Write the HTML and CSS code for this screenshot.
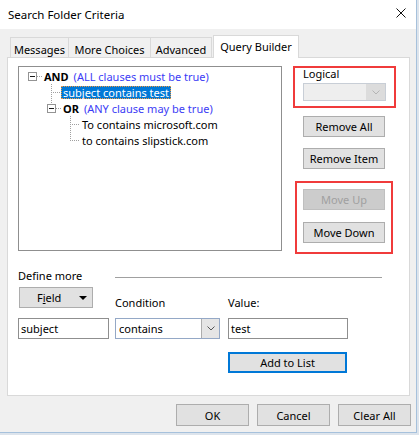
FILE: index.html
```html
<!DOCTYPE html>
<html lang="en">
<head>
<meta charset="utf-8">
<title>Search Folder Criteria</title>
<link rel="stylesheet" href="styles.css">
</head>
<body>
<div class="window">
  <div class="titlebar">
    <span class="title">Search Folder Criteria</span>
    <svg class="close" width="10" height="10" viewBox="0 0 10 10"><path d="M0.5 0.5 L9.5 9.5 M9.5 0.5 L0.5 9.5" stroke="#111" stroke-width="1" fill="none"/></svg>
  </div>

  <div class="tabstrip">
    <div class="tab tab-messages">Messages</div>
    <div class="tab tab-more">More Choices</div>
    <div class="tab tab-adv">Advanced</div>
    <div class="tab tab-active">Query Builder</div>
  </div>

  <div class="panel">
    <div class="upper">
      <div class="tree">
        <div class="row">
          <span class="cell exp-root"><span class="box"></span></span>
          <span class="node"><b>AND</b><span class="note">(ALL clauses must be true)</span></span>
        </div>
        <div class="row">
          <span class="cell"></span>
          <span class="cell tee"></span>
          <span class="node sel">subject contains test</span>
        </div>
        <div class="row">
          <span class="cell"></span>
          <span class="cell exp-last"><span class="box"></span></span>
          <span class="node"><b>OR</b><span class="note">(ANY clause may be true)</span></span>
        </div>
        <div class="row">
          <span class="cell"></span>
          <span class="cell"></span>
          <span class="cell tee"></span>
          <span class="node">To contains microsoft.com</span>
        </div>
        <div class="row">
          <span class="cell"></span>
          <span class="cell"></span>
          <span class="cell ell"></span>
          <span class="node">to contains slipstick.com</span>
        </div>
      </div>

      <div class="side">
        <div class="redbox rb-logical">
          <div class="lbl-logical">Logical</div>
          <div class="combo-dis">
            <span class="combo-field"></span>
            <span class="combo-btn-dis"><svg width="8" height="5" viewBox="0 0 8 5"><path d="M0.5 0.5 L4 4 L7.5 0.5" stroke="#b4b4b4" fill="none"/></svg></span>
          </div>
        </div>
        <button class="btn side-btn b-removeall">Remove All</button>
        <button class="btn side-btn b-removeitem">Remove Item</button>
        <div class="redbox rb-move">
          <button class="btn side-btn btn-disabled">Move Up</button>
          <button class="btn side-btn b-movedown">Move Down</button>
        </div>
      </div>
    </div>

    <div class="define">
      <span class="define-label">Define more</span>
      <span class="rule"></span>
    </div>

    <div class="form">
      <button class="btn field-btn"><span>F<u>i</u>eld</span><svg class="tri" width="8" height="4" viewBox="0 0 8 4"><polygon points="0,0 8,0 4,4" fill="#000"/></svg></button>
      <span class="flabel">Condition</span>
      <span class="flabel">Value:</span>

      <div class="textbox tb-subject">subject</div>
      <div class="combo-edit">
        <span class="combo-text">contains</span>
        <span class="combo-btn"><svg width="8" height="5" viewBox="0 0 8 5"><path d="M0.5 0.5 L4 4 L7.5 0.5" stroke="#555" fill="none"/></svg></span>
      </div>
      <div class="textbox tb-value">test</div>

      <button class="btn btn-default add-btn">Add to List</button>
    </div>
  </div>

  <div class="footer">
    <button class="btn fbtn">OK</button>
    <button class="btn fbtn">Cancel</button>
    <button class="btn fbtn">Clear All</button>
  </div>
</div>
</body>
</html>
```

FILE: styles.css
```css
* { box-sizing: border-box; }

html, body { margin: 0; padding: 0; }

body {
  width: 419px;
  height: 435px;
  overflow: hidden;
  background: #dde4ec;
  font-family: "Noto Sans", "Open Sans", sans-serif;
  font-size: 11px;
  color: #000;
}

.window {
  width: 417px;
  height: 433px;
  background: #f0f0f0;
  border-right: 1px solid #a6c1dc;
  border-bottom: 1px solid #a6c1dc;
  display: flex;
  flex-direction: column;
}

/* title bar */
.titlebar {
  height: 29px;
  flex: none;
  background: #fff;
  display: flex;
  align-items: center;
  justify-content: space-between;
  padding: 0 10px 0 8px;
}
.title { line-height: 16px; font-size: 11.5px; }
.close { align-self: flex-start; margin-top: 8px; }

/* tabs */
.tabstrip {
  height: 28px;
  flex: none;
  display: flex;
  align-items: flex-end;
  padding-left: 10px;
}
.tab {
  height: 20px;
  border: 1px solid #d9d9d9;
  border-bottom: none;
  background: #f0f0f0;
  display: flex;
  align-items: center;
  justify-content: center;
  padding-top: 3px;
  white-space: nowrap;
}
.tab-messages { width: 59px; }
.tab-more { width: 83px; margin-left: -1px; }
.tab-adv { width: 62px; margin-left: -1px; }
.tab-active {
  width: 86px;
  height: 23px;
  margin-left: 1px;
  margin-bottom: -1px;
  padding-top: 0;
  padding-bottom: 1px;
  background: #fff;
  position: relative;
  z-index: 1;
}

/* panel */
.panel {
  flex: none;
  margin-left: 7px;
  width: 403px;
  height: 339px;
  background: #fff;
  border: 1px solid #d9d9d9;
  padding: 8px 0 0 10px;
}

.upper { display: flex; align-items: flex-start; }

/* tree */
.tree {
  width: 264px;
  height: 185px;
  flex: none;
  border: 1px solid #8f8f8f;
  background: #fff;
  padding: 1px 0 0 4px;
}
.row {
  display: flex;
  align-items: flex-start;
  height: 16px;
}
.cell {
  display: block;
  flex: none;
  width: 19px;
  height: 16px;
  background-repeat: no-repeat;
}
.tee {
  background-image:
    repeating-linear-gradient(to bottom, #a0a0a0 0 1px, transparent 1px 2px),
    repeating-linear-gradient(to right, #a0a0a0 0 1px, transparent 1px 2px);
  background-size: 1px 16px, 10px 1px;
  background-position: 9px 0, 9px 8px;
}
.ell {
  background-image:
    repeating-linear-gradient(to bottom, #a0a0a0 0 1px, transparent 1px 2px),
    repeating-linear-gradient(to right, #a0a0a0 0 1px, transparent 1px 2px);
  background-size: 1px 9px, 10px 1px;
  background-position: 9px 0, 9px 8px;
}
.exp-root {
  background-image:
    repeating-linear-gradient(to right, #a0a0a0 0 1px, transparent 1px 2px);
  background-size: 5px 1px;
  background-position: 14px 8px;
}
.exp-last {
  background-image:
    repeating-linear-gradient(to bottom, #a0a0a0 0 1px, transparent 1px 2px),
    repeating-linear-gradient(to right, #a0a0a0 0 1px, transparent 1px 2px);
  background-size: 1px 4px, 5px 1px;
  background-position: 9px 0, 14px 8px;
}
.box {
  display: block;
  width: 9px;
  height: 9px;
  margin: 4px 0 0 5px;
  border: 1px solid #939393;
  background: #fff linear-gradient(#1a1a1a, #1a1a1a) no-repeat 1px 3px / 5px 1px;
}
.node {
  flex: none;
  white-space: nowrap;
  height: 13px;
  line-height: 11px;
  margin-top: 2px;
  padding: 0 1px;
  border: 1px solid transparent;
}
.node b { font-weight: 700; }
.note { color: #3c3cf5; margin-left: 5px; }
.sel {
  background: #0078d7;
  color: #fff;
  border: 1px dotted #f09a40;
}

/* right column */
.side {
  flex: none;
  width: 103px;
  margin-left: 11px;
}
.redbox { border: 2px solid #f03b3b; }
.rb-logical {
  width: 103px;
  height: 42px;
  padding-left: 8px;
}
.lbl-logical {
  line-height: 13px;
  margin-top: -1px;
}
.combo-dis {
  display: flex;
  width: 83px;
  height: 18px;
  margin-top: 3px;
  border: 1px solid #c8ced6;
  background: #eeeeee;
}
.combo-field { flex: 1; }
.combo-btn-dis {
  width: 19px;
  display: flex;
  align-items: center;
  justify-content: center;
  background: #dcdcdc;
}

.btn {
  display: flex;
  align-items: center;
  justify-content: center;
  height: 21px;
  padding: 0;
  margin: 0;
  border: 1px solid #adadad;
  background: #e1e1e1;
  font: inherit;
  color: #000;
  white-space: nowrap;
}
.side-btn { width: 82px; margin-left: 10px; }
.b-removeall { margin-top: 8px; }
.b-removeitem { margin-top: 11px; }
.rb-move {
  width: 98px;
  height: 73px;
  margin-top: 12px;
  margin-left: 2px;
  padding: 6px 0 0 6px;
}
.rb-move .side-btn { margin-left: 0; }
.b-movedown { margin-top: 12px; }
.btn-disabled {
  background: #cccccc;
  border-color: #bfbfbf;
  color: #a0a0a0;
}

/* define more */
.define {
  display: flex;
  align-items: flex-start;
  height: 14px;
  margin-top: 15px;
}
.define-label {
  width: 97px;
  line-height: 14px;
}
.rule {
  width: 267px;
  height: 1px;
  margin-top: 8px;
  background: #a0a0a0;
}

/* form grid */
.form {
  display: grid;
  grid-template-columns: 97px 113px 120px;
  margin-top: 4px;
}
.field-btn {
  width: 74px;
  margin-left: 1px;
  justify-content: flex-start;
  padding-left: 17px;
}
.field-btn .tri { margin-left: auto; margin-right: 5px; }
.flabel {
  align-self: end;
  line-height: 14px;
  margin-bottom: -2px;
}
.textbox {
  height: 21px;
  margin-top: 10px;
  border: 1px solid #8f8f8f;
  background: #fff;
  padding: 0 2px;
  display: flex;
  align-items: center;
}
.tb-subject { width: 91px; }
.tb-value { width: 120px; }
.combo-edit {
  display: flex;
  width: 105px;
  height: 21px;
  margin-top: 10px;
  border: 1px solid #94a8c6;
  background: #fff;
}
.combo-text {
  flex: 1;
  padding-left: 3px;
  display: flex;
  align-items: center;
}
.combo-btn {
  width: 18px;
  border-left: 1px solid #adadad;
  background: #e5e5e5;
  display: flex;
  align-items: center;
  justify-content: center;
}
.add-btn {
  grid-column: 3;
  width: 119px;
  margin-top: 13px;
}
.btn-default {
  border: 1px solid #0078d7;
  box-shadow: inset 0 0 0 1px #0078d7;
}

/* footer */
.footer {
  display: flex;
  justify-content: flex-end;
  gap: 8px;
  padding-right: 5px;
  margin-top: 8px;
}
.fbtn { width: 73px; height: 22px; }
```
